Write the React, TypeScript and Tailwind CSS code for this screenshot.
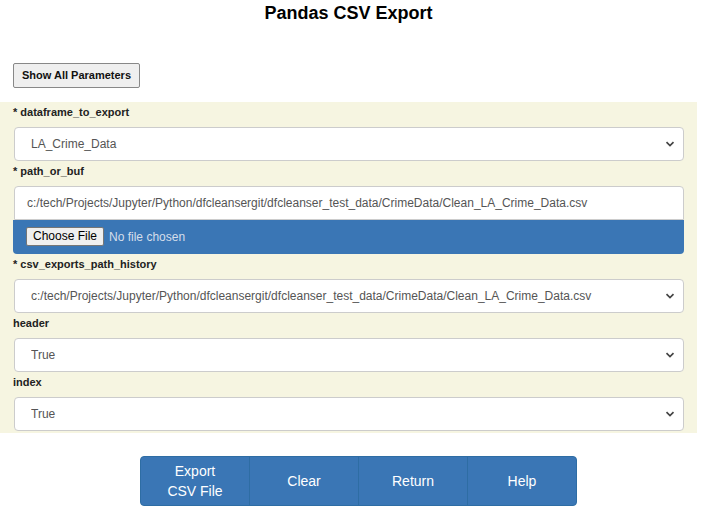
import { useState } from "react";

const PATH = "c:/tech/Projects/Jupyter/Python/dfcleansergit/dfcleanser_test_data/CrimeData/Clean_LA_Crime_Data.csv";

function Chevron() {
  return (
    <svg width="10" height="7" viewBox="0 0 10 7" className="pointer-events-none absolute right-[9px] top-1/2 -translate-y-1/2">
      <path d="M1.5 1.6 L5 5 L8.5 1.6" fill="none" stroke="#444" strokeWidth="1.7" />
    </svg>
  );
}

function Label({ children }: { children: React.ReactNode }) {
  return <div className="h-[25px] pl-[13px] pt-[3px] text-[11px] font-bold leading-[14px] text-[#222]">{children}</div>;
}

function Select({ value, options }: { value: string; options: string[] }) {
  const [v, setV] = useState(value);
  return (
    <div className="relative ml-[14px] mr-[13px]">
      <select
        value={v}
        onChange={e => setV(e.target.value)}
        className="block h-[34px] w-full appearance-none rounded-[4px] border border-[#ccc] bg-white pl-[16px] pr-8 text-[12px] text-[#555] outline-none"
      >
        {options.map(o => <option key={o} value={o}>{o}</option>)}
      </select>
      <Chevron />
    </div>
  );
}

export default function App() {
  return (
    <div className="h-[517px] w-[707px] bg-white font-['Liberation_Sans',Arial,sans-serif]">
      <h1 className="pt-[3px] pr-[10px] text-center text-[18px] font-bold leading-[20px] text-black">Pandas CSV Export</h1>

      <div className="h-[39px]" />
      <button className="ml-[13px] h-[25px] rounded-[2px] border border-[#888] bg-[#efefef] px-[8px] text-[11px] font-bold text-[#111]">
        Show All Parameters
      </button>

      <div className="mt-[14px] mr-[10px] bg-[#f6f5e1] pb-[2px]">
        <Label>* dataframe_to_export</Label>
        <Select value="LA_Crime_Data" options={["LA_Crime_Data"]} />

        <Label>* path_or_buf</Label>
        <div className="ml-[14px] mr-[13px]">
          <input
            defaultValue={PATH}
            className="block h-[34px] w-full rounded-t-[4px] border border-[#ccc] bg-white px-[12px] text-[12px] text-[#555] outline-none"
          />
          <div className="flex h-[34px] items-center gap-[5px] rounded-b-[4px] bg-[#3a76b5] pl-[13px] -ml-[1px]">
            <button className="h-[19px] rounded-[2px] border border-[#767676] bg-[#efefef] px-[6px] text-[12px] leading-[17px] text-black">Choose File</button>
            <span className="text-[12px] text-[#d5deeb]">No file chosen</span>
          </div>
        </div>

        <Label>* csv_exports_path_history</Label>
        <Select value={PATH} options={[PATH]} />

        <Label>header</Label>
        <Select value="True" options={["True", "False"]} />

        <Label>index</Label>
        <Select value="True" options={["True", "False"]} />
      </div>

      <div className="mt-[23px] flex justify-center">
        <div className="ml-[10px] flex h-[50px] w-[437px] overflow-hidden rounded-[4px] border border-[#2e6da4] bg-[#3a76b5] text-[14px] leading-[20px] text-white">
          {["Export\nCSV File", "Clear", "Return", "Help"].map((t, i) => (
            <button key={t} className={`flex-1 whitespace-pre-line ${i > 0 ? "border-l border-[#2e6da4]" : ""}`}>{t}</button>
          ))}
        </div>
      </div>
    </div>
  );
}
